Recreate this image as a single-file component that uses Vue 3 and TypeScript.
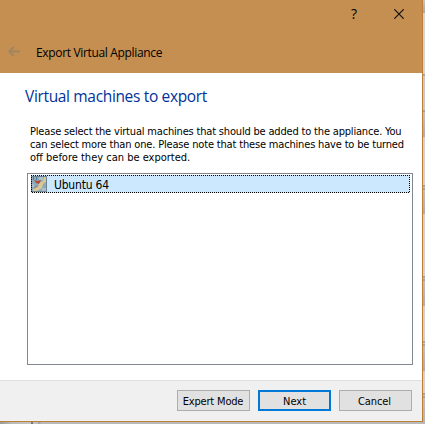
<script setup lang="ts">
import { ref } from 'vue'

const description: string[] = [
  'Please select the virtual machines that should be added to the appliance. You',
  'can select more than one. Please note that these machines have to be turned',
  'off before they can be exported.',
]
const machines = ref<string[]>(['Ubuntu 64'])
const selected = ref(0)
</script>

<template>
  <div class="desktop">
    <section class="dialog">
      <header>
        <div class="controls">
          <span class="help">?</span>
          <svg class="close" width="10" height="10" viewBox="0 0 10 10"><path d="M.3 .3 9.7 9.7M9.7 .3 .3 9.7" /></svg>
        </div>
        <div class="caption">
          <svg class="back" width="12" height="11" viewBox="0 0 12 11"><path d="M12 5.5H1.2M5.7 1 1.2 5.5 5.7 10" /></svg>
          <span class="title">Export Virtual Appliance</span>
        </div>
      </header>
      <main>
        <h1>Virtual machines to export</h1>
        <p><span v-for="(line, i) in description" :key="i" :class="'line' + i">{{ line }}</span></p>
        <ul>
          <li v-for="(name, i) in machines" :key="name" :class="{ selected: i === selected }" @click="selected = i">
            <svg class="vm" width="16" height="16" viewBox="0 0 16 16">
              <path fill="#8fa9bc" d="M0 0h16v16H0z" />
              <path fill="#a9bfcd" d="M8 1h4v3H8zM1 8h2v3H1zM11 12h4v3h-4z" />
              <path fill="#dac893" d="M13 1h3v4l-4 3-1 4-5 3H2v-2l5-2 1-4 4-2z" />
              <path fill="#98917f" d="m4 10 3-1-1 2-3 2z" />
              <path fill="#b0503c" d="m3 4 3 1 4-1-2 4-3-1z" />
              <path fill="#557a94" d="M2 1h1v3H2zM5 1h1v3H5z" />
              <path fill="none" stroke="#6f8492" d="M.5 .5h15v15H.5z" />
            </svg>
            <span>{{ name }}</span>
            <svg class="focus" width="379" height="18"><rect x=".5" y=".5" width="378" height="17" /></svg>
          </li>
        </ul>
      </main>
      <footer>
        <button class="expert"><span>Expert Mode</span></button>
        <button class="next"><span>Next</span></button>
        <button class="cancel"><span>Cancel</span></button>
      </footer>
    </section>
    <aside></aside>
    <div class="below"></div>
  </div>
</template>

<style>
body { margin: 0; overflow: hidden; }
</style>

<style scoped>
* { box-sizing: border-box; }
.desktop {
  display: grid;
  grid-template: 422px 2px / 423px 2px;
  width: 425px;
  height: 424px;
  font: 11px/13px "DejaVu Sans Condensed", "DejaVu Sans", sans-serif;
  color: #000;
}
.dialog {
  display: flex;
  flex-direction: column;
  border: solid #bd8036;
  border-width: 0 1px 1px 0;
  background: #fff;
}
header { height: 73px; flex: none; background: #c48f50; }
.controls { display: flex; height: 27px; padding: 0 17px 0 0; justify-content: flex-end; align-items: center; }
.help { margin-right: 36px; width: 7px; font: 500 14px/26px "Open Sans", sans-serif; }
.controls svg { margin-right: 1px; }
.close path { fill: none; stroke: #111; stroke-width: 1.2; }
.caption { display: flex; align-items: center; height: 46px; padding: 6px 0 0 8px; }
.back path { fill: none; stroke: #a08561; stroke-width: 1.8; }
.back { margin-top: -4px; }
.title { margin-left: 16px; font: 12px/16px "Open Sans", sans-serif; letter-spacing: -0.34px; }
main { height: 307px; flex: none; padding: 12px 9px 0 27px; }
h1 { margin: 0 0 0 -2px; font: 15.5px/22px "Open Sans", sans-serif; letter-spacing: -0.34px; color: #003399; white-space: nowrap; }
p { display: flex; flex-direction: column; align-items: flex-start; margin: 18px 0 9px 3px; white-space: nowrap; }
.line0 { letter-spacing: -0.18px; }
.line1 { letter-spacing: -0.17px; }
ul { height: 192px; margin: 0; padding: 1px 2px 0 3px; border: 1px solid #828790; list-style: none; }
li { position: relative; display: flex; align-items: center; height: 18px; }
li.selected { background: #cce8ff; }
li span { margin-left: 7px; padding-top: 2px; font-size: 12px; letter-spacing: -0.2px; }
.focus { position: absolute; inset: 0; }
.focus rect { fill: none; stroke: #000; stroke-dasharray: 1 1; stroke-dashoffset: .5; shape-rendering: crispEdges; }
footer { display: flex; flex: 1; gap: 8px; justify-content: flex-end; padding: 9px 10px 0; border-top: 1px solid #dfdfdf; background: #f0f0f0; }
button { width: 73px; height: 21px; padding: 2px 0 0; border: 1px solid #adadad; background: #e1e1e1; font: inherit; color: #000; white-space: nowrap; }
.expert { letter-spacing: -0.18px; padding-right: 1px; }
.cancel { letter-spacing: -0.1px; padding-right: 2px; }
.next { border: 2px solid #0078d7; }
aside {
  background: linear-gradient(
    #c4c4c8 0, #a9a9ac 13px, #d4d2d3 13px 74px, #a8a7a9 74px 76px, #cac8ca 76px 110px,
    #a09fa1 110px 112px, #c2c0c3 112px, #aeacaf 137px, #d2d0d1 137px 185px,
    #a3a2a4 185px 187px, #c8c6c8 187px 188px, #a3a2a4 188px 190px, #c0bec1 190px, #aeacaf 214px,
    #d2d0d1 214px 276px, #a3a2a4 276px 278px, #c8c6c8 278px 279px, #a3a2a4 279px 281px, #c0bec1 281px, #aeacaf 306px,
    #d2d0d1 306px 341px, #a3a2a4 341px 343px, #c8c6c8 343px 344px, #a3a2a4 344px 346px, #c0bec1 346px, #aeacaf 371px,
    #d2d0d1 371px 393px, #a3a2a4 393px 395px, #c8c6c8 395px 396px, #a3a2a4 396px 398px, #c0bec1 398px, #b4b2b5 422px
  );
}
.below { grid-column: 1 / 3; background: linear-gradient(90deg, #999b96 0, #b9bbb7 12px, #c4c4c2 31px, #777 31px 33px, #c0c0c0 33px 38px, #a5a5a5 38px 40px, #b8bab9 41px); }
</style>
